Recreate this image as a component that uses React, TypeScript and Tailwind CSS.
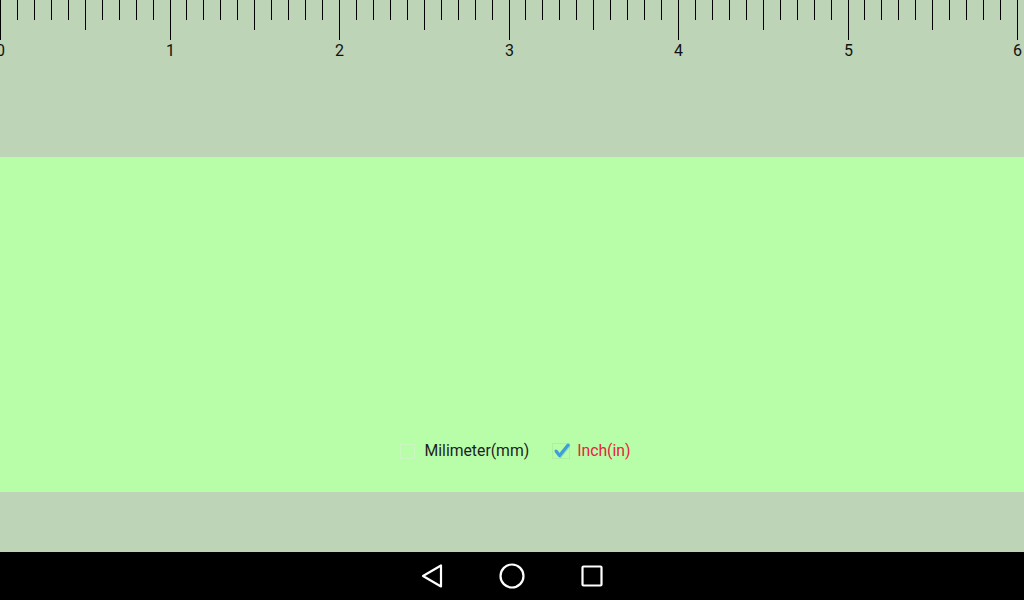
import React from "react";

const INCH = 169.5;

function Ruler() {
  const ticks: React.ReactNode[] = [];
  for (let i = 0; i <= 61; i++) {
    const x = Math.round((i * INCH) / 10) + 0.5;
    const len = i % 10 === 0 ? 40 : i % 5 === 0 ? 30 : 20;
    ticks.push(<line key={i} x1={x} y1={0} x2={x} y2={len} stroke="#000" strokeWidth={1} />);
  }
  const labels: React.ReactNode[] = [];
  for (let n = 0; n <= 6; n++) {
    const x = Math.round(n * INCH) + 0.5;
    labels.push(
      <text key={n} x={x} y={56} textAnchor="middle" fontSize={16} fill="#111" fontFamily="Roboto, sans-serif">
        {n}
      </text>
    );
  }
  return (
    <svg width={1024} height={157} className="block">
      {ticks}
      {labels}
    </svg>
  );
}

export default function App() {
  return (
    <div className="w-[1024px] h-[600px] flex flex-col overflow-hidden" style={{ fontFamily: "Roboto, 'Noto Sans', sans-serif" }}>
      <div className="h-[157px] bg-[#bdd4b7]">
        <Ruler />
      </div>
      <div className="h-[335px] bg-[#b8fea8] flex items-end justify-center pb-[31px]">
        <div className="flex items-center ml-[7px]">
          <div className="flex items-center">
            <div className="w-[15px] h-[15px] shrink-0 border border-[#c9f7bf] mr-[9px]" />
            <span className="text-[15.75px] text-[#1e1e1e] leading-[20px]">Milimeter(mm)</span>
          </div>
          <div className="flex items-center ml-[23px]">
            <div className="w-[18px] h-[16px] shrink-0 border border-[#acf0a0] mr-[7px]">
              <svg width="18" height="16" viewBox="0 0 18 16" className="block -m-px overflow-visible">
                <path d="M4 8 L7.5 12.5 L16 2" fill="none" stroke="#2e7fb8" strokeOpacity="0.35" strokeWidth="3.4" strokeLinecap="round" strokeLinejoin="round" transform="translate(0.6 0.8)" />
                <path d="M4 8 L7.5 12.5 L16 2" fill="none" stroke="#3c9fdc" strokeWidth="3" strokeLinecap="round" strokeLinejoin="round" />
              </svg>
            </div>
            <span className="text-[15.75px] text-[#e8213f] leading-[20px]">Inch(in)</span>
          </div>
        </div>
      </div>
      <div className="h-[60px] bg-[#bdd4b7]" />
      <div className="h-[48px] bg-black flex items-center justify-center gap-[54px]">
        <svg width="24" height="26" viewBox="0 0 24 26">
          <path d="M21 2.5 L21 23.5 L3 13 Z" fill="none" stroke="#fff" strokeWidth="2.2" strokeLinejoin="round" />
        </svg>
        <svg width="28" height="28" viewBox="0 0 28 28">
          <circle cx="14" cy="14" r="11.5" fill="none" stroke="#fff" strokeWidth="2.2" />
        </svg>
        <svg width="24" height="24" viewBox="0 0 24 24">
          <rect x="2.5" y="2.5" width="19" height="19" rx="1" fill="none" stroke="#fff" strokeWidth="2.2" />
        </svg>
      </div>
    </div>
  );
}
